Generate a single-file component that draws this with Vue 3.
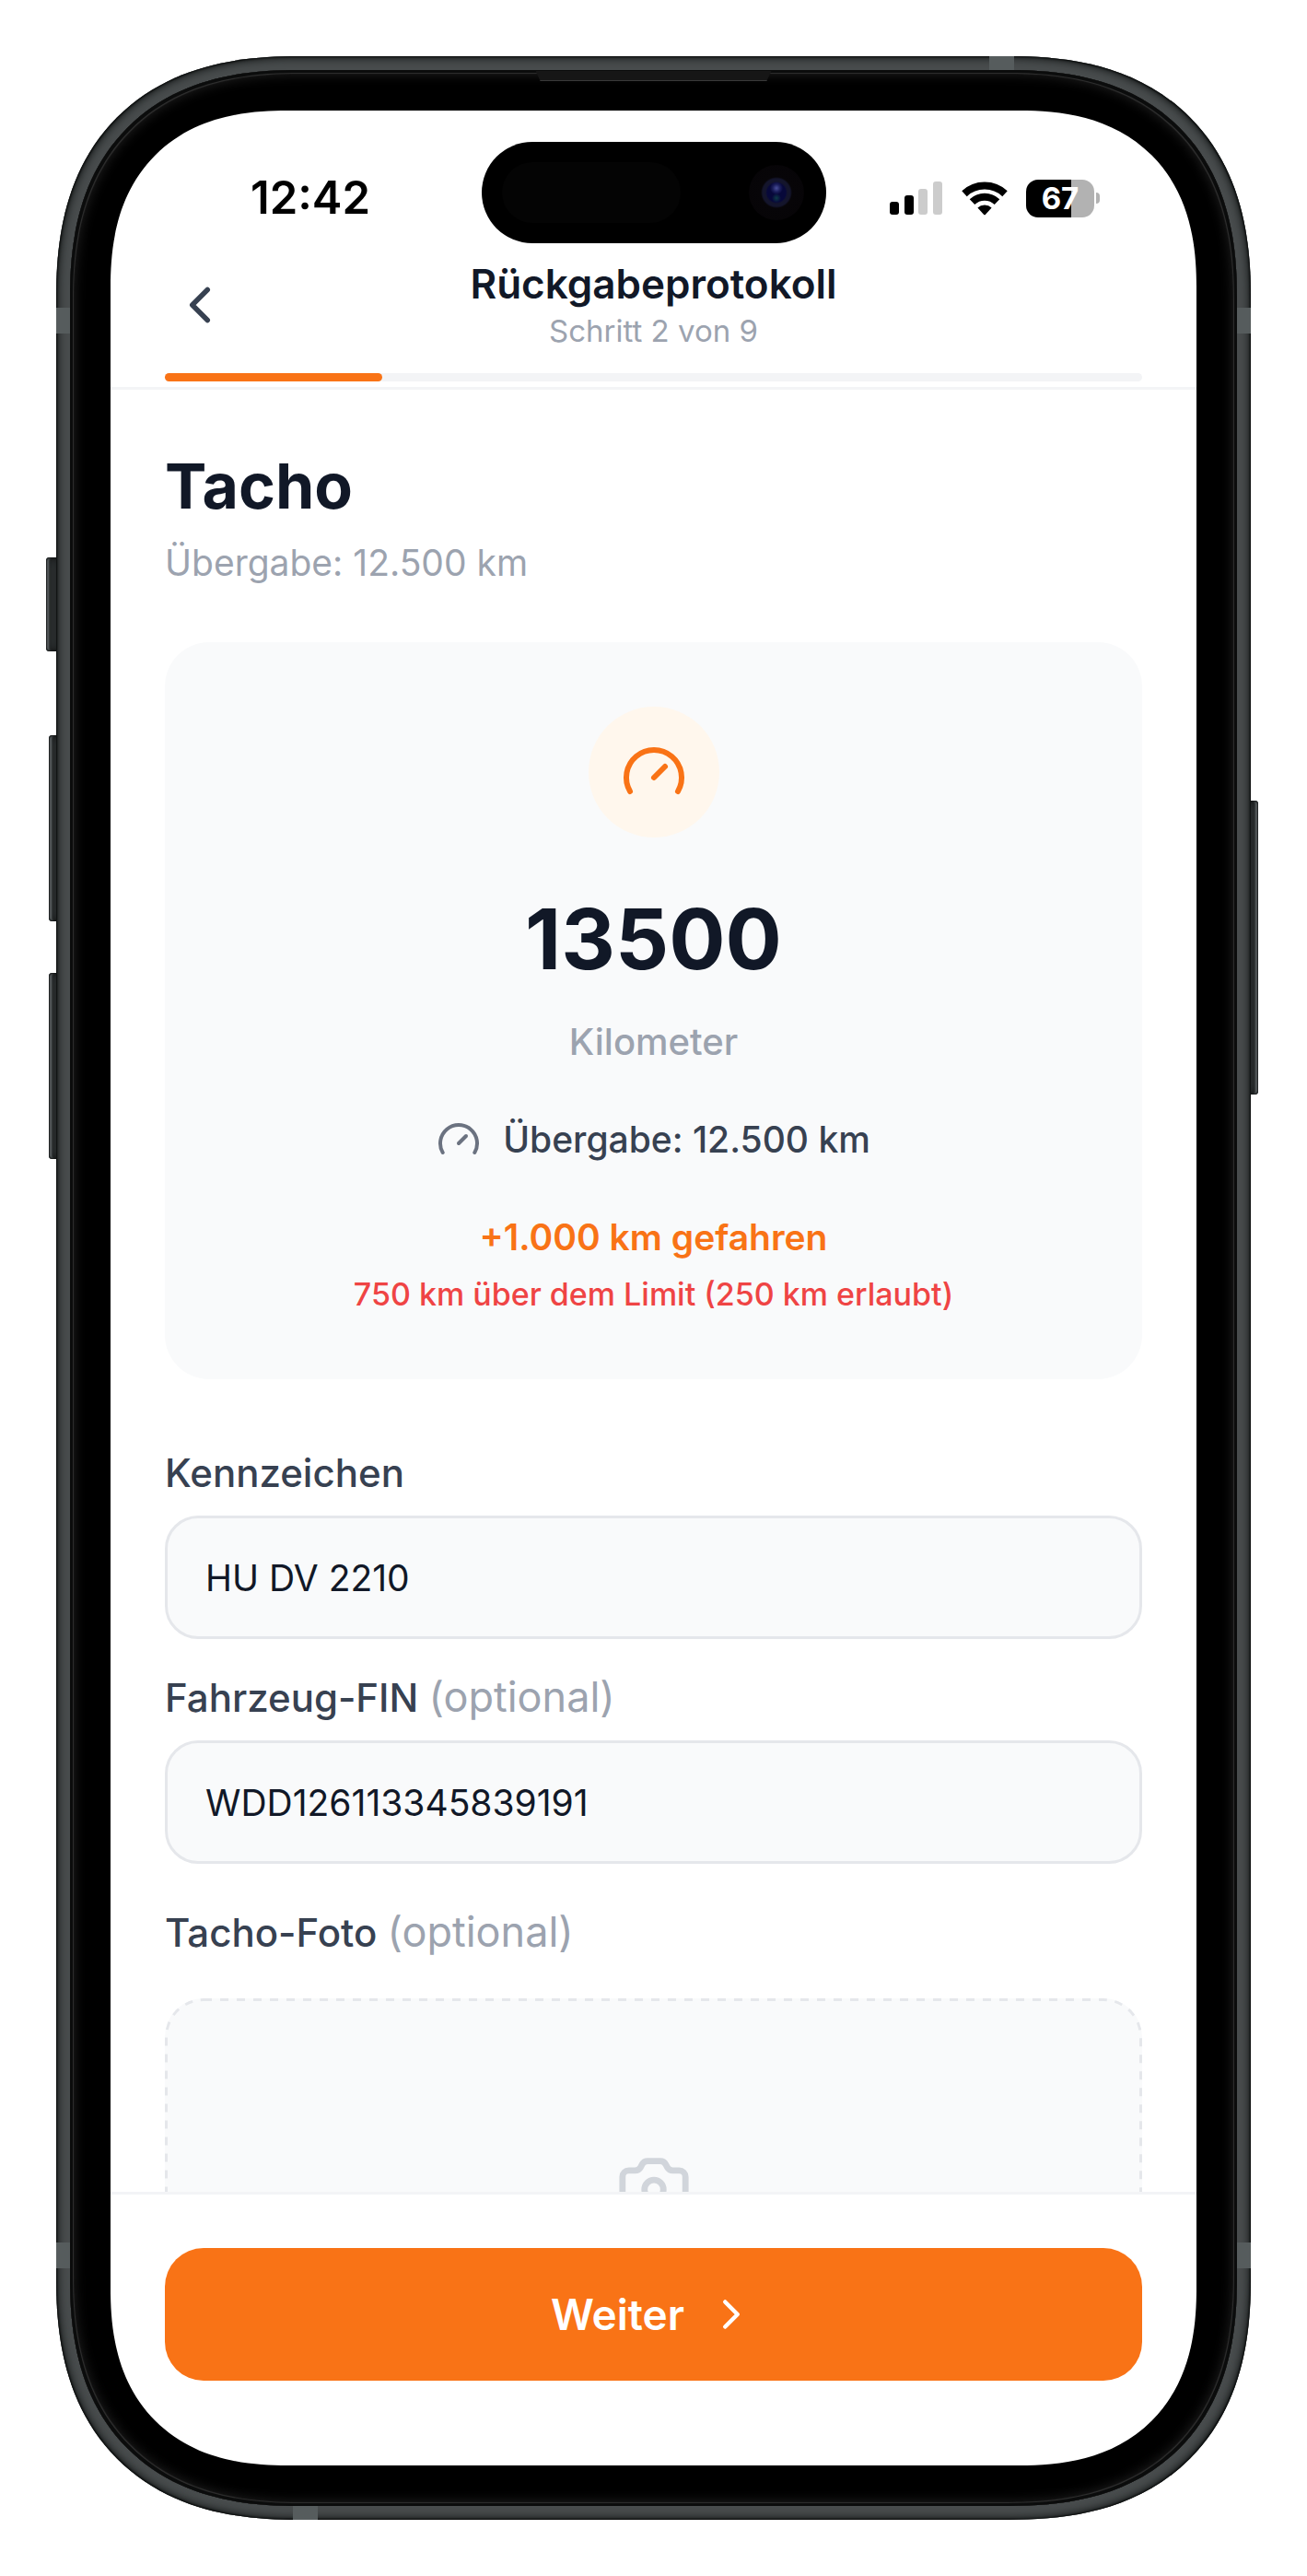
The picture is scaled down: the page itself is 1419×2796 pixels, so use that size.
<script setup>
import { ref } from 'vue'

const step = 2
const totalSteps = 9
const mileage = 13500
const plate = ref('HU DV 2210')
const vin = ref('WDD126113345839191')
</script>

<template>
  <div class="stage">
    <div class="phone">
      <span class="key key-action"></span>
      <span class="key key-up"></span>
      <span class="key key-down"></span>
      <span class="key key-power"></span>
      <div class="metal">
        <span class="band band-side band-left band-high"></span>
        <span class="band band-side band-right band-high"></span>
        <span class="band band-side band-left band-low"></span>
        <span class="band band-side band-right band-low"></span>
        <span class="band band-top"></span>
        <span class="band band-bottom"></span>
        <div class="bezel">
          <span class="earpiece"></span>
          <div class="screen">
            <div class="island">
              <span class="sensor"></span>
              <span class="camera-lens"></span>
            </div>

            <div class="status-bar">
              <span class="clock">12:42</span>
              <div class="status-icons">
                <svg class="signal" width="58" height="36" viewBox="0 0 58 36" aria-hidden="true">
                  <rect x="0" y="22" width="10" height="14" rx="3" />
                  <rect x="16" y="15" width="10" height="21" rx="3" />
                  <rect x="31" y="8" width="10" height="28" rx="3" fill="#cccccc" />
                  <rect x="47" y="0" width="10" height="36" rx="3" fill="#cccccc" />
                </svg>
                <svg class="wifi" width="50" height="37" viewBox="0 0 50 37" aria-hidden="true">
                  <g fill="none" stroke="#000">
                    <path d="M3 13.2A32.3 32.3 0 0 1 47 13.2" stroke-width="8" />
                    <path d="M11.5 22.2A19.5 19.5 0 0 1 38.5 22.2" stroke-width="8" />
                  </g>
                  <path d="M17.4 28.5A11 11 0 0 1 32.6 28.5L26 35.8Q25 36.8 24 35.8Z" />
                </svg>
                <div class="battery">
                  <span class="battery-body">67</span>
                  <span class="battery-tip"></span>
                </div>
              </div>
            </div>

            <header class="header">
              <div class="header-row">
                <button class="back" type="button" aria-label="Zurück">
                  <svg width="66" height="66" viewBox="0 0 24 24" aria-hidden="true">
                    <path d="m15 18-6-6 6-6" />
                  </svg>
                </button>
                <div class="header-text">
                  <h1 class="header-title">Rückgabeprotokoll</h1>
                  <p class="header-step">Schritt {{ step }} von {{ totalSteps }}</p>
                </div>
              </div>
              <div class="progress">
                <div class="progress-fill" :style="{ width: (step / totalSteps) * 100 + '%' }"></div>
              </div>
            </header>

            <main class="content">
              <h2 class="title">Tacho</h2>
              <p class="subtitle">Übergabe: 12.500 km</p>

              <section class="card">
                <div class="badge">
                  <svg width="72" height="72" viewBox="0 0 24 24" aria-hidden="true">
                    <path d="m12 14 4-4" />
                    <path d="M3.34 19a10 10 0 1 1 17.32 0" />
                  </svg>
                </div>
                <p class="mileage">{{ mileage }}</p>
                <p class="unit">Kilometer</p>
                <p class="handover">
                  <svg width="48" height="48" viewBox="0 0 24 24" aria-hidden="true">
                    <path d="m12 14 4-4" />
                    <path d="M3.34 19a10 10 0 1 1 17.32 0" />
                  </svg>
                  <span>Übergabe: 12.500 km</span>
                </p>
                <p class="driven">+1.000 km gefahren</p>
                <p class="limit">750 km über dem Limit (250 km erlaubt)</p>
              </section>

              <div class="fields">
                <div class="field">
                  <label class="label" for="plate">Kennzeichen</label>
                  <input id="plate" v-model="plate" class="input" type="text" />
                </div>
                <div class="field">
                  <label class="label" for="vin">Fahrzeug-FIN <span class="optional">(optional)</span></label>
                  <input id="vin" v-model="vin" class="input" type="text" />
                </div>
              </div>

              <p id="photo-label" class="label photo-label">Tacho-Foto <span class="optional">(optional)</span></p>
              <button class="dropzone" type="button" aria-labelledby="photo-label">
                <svg class="dropzone-outline" width="100%" height="100%" aria-hidden="true">
                  <rect class="dash" x="0" y="0" width="100%" height="100%" rx="42" />
                </svg>
                <svg class="camera-icon" width="82" height="82" viewBox="0 0 24 24" aria-hidden="true">
                  <path d="M13.997 4a2 2 0 0 1 1.76 1.05l.486.9A2 2 0 0 0 18.003 7H20a2 2 0 0 1 2 2v9a2 2 0 0 1-2 2H4a2 2 0 0 1-2-2V9a2 2 0 0 1 2-2h1.997a2 2 0 0 0 1.759-1.048l.489-.904A2 2 0 0 1 10.004 4z" />
                  <circle cx="12" cy="13" r="3" />
                </svg>
              </button>
            </main>

            <footer class="footer">
              <button class="next" type="button">
                <span>Weiter</span>
                <svg width="54" height="54" viewBox="0 0 24 24" aria-hidden="true">
                  <path d="m9 18 6-6-6-6" />
                </svg>
              </button>
            </footer>
          </div>
        </div>
      </div>
    </div>
  </div>
</template>

<style>
body {
  margin: 0;
  background: #ffffff;
}
</style>

<style scoped>
.stage {
  padding: 61px;
  font-family: "Inter", "Liberation Sans", sans-serif;
  color: #111827;
}

.stage * {
  box-sizing: border-box;
}

h1,
h2,
p {
  margin: 0;
}

button {
  border: 0;
  padding: 0;
  font-family: inherit;
  cursor: pointer;
}

svg {
  display: block;
  flex: none;
}

/* Device body */
.phone {
  position: relative;
}

.metal {
  position: relative;
  padding: 15px;
  border-radius: 228px;
  background: #484c4d;
  box-shadow: inset 0 0 2px 1px #0a0c0c, inset 0 0 10px 2px #141717;
}

.bezel {
  position: relative;
  padding: 44px;
  border-radius: 213px;
  background: #000000;
  box-shadow: inset 0 0 0 3px #0b0c0c, inset 0 0 1px 4px #303030, inset 0 0 14px 4px #222222;
}

.screen {
  position: relative;
  display: flex;
  flex-direction: column;
  aspect-ratio: 1179 / 2556;
  overflow: hidden;
  border-radius: 167px;
  background: #ffffff;
}

@supports (corner-shape: superellipse(1.25)) {
  .metal,
  .bezel,
  .screen {
    corner-shape: superellipse(1.25);
  }

  .metal {
    border-radius: 262px;
  }

  .bezel {
    border-radius: 247px;
  }

  .screen {
    border-radius: 192px;
  }
}

.key {
  position: absolute;
  border-radius: 4px;
  background: #2c3031;
  box-shadow: inset 0 0 2px 1px #0a0b0b, inset 3px 0 2px #6a7072, inset 0 0 8px 2px #161818;
}

.key-action {
  top: 20.35%;
  left: -11px;
  width: 16px;
  height: 3.8%;
}

.key-up,
.key-down {
  left: -8px;
  width: 14px;
  height: 7.55%;
}

.key-up {
  top: 27.55%;
}

.key-down {
  top: 37.2%;
}

.key-power {
  top: 30.2%;
  right: -8px;
  width: 14px;
  height: 11.95%;
  box-shadow: inset 0 0 2px 1px #0a0b0b, inset -3px 0 2px #6a7072, inset 0 0 8px 2px #161818;
}

.band {
  position: absolute;
  background: #565c5d;
}

.band-side {
  width: 15px;
  height: 28px;
}

.band-left {
  left: 0;
}

.band-right {
  right: 0;
}

.band-high {
  top: 10.2%;
}

.band-low {
  bottom: 10.2%;
}

.band-top,
.band-bottom {
  width: 27px;
  height: 15px;
}

.band-top {
  top: 0;
  right: 19.8%;
}

.band-bottom {
  bottom: 0;
  left: 19.8%;
}

.earpiece {
  position: absolute;
  top: 1px;
  left: 50%;
  width: 256px;
  height: 11px;
  margin-left: -128px;
  border-bottom: 1px solid #3a3a3a;
  background: #161616;
  clip-path: polygon(0 0, 100% 0, 98% 100%, 2% 100%);
}

/* Status bar */
.island {
  position: absolute;
  top: 34px;
  left: 50%;
  display: flex;
  align-items: center;
  justify-content: space-between;
  width: 374px;
  height: 110px;
  padding: 0 24px 0 22px;
  border-radius: 55px;
  background: #000000;
  transform: translateX(-50%);
}

.sensor {
  width: 194px;
  height: 66px;
  border-radius: 33px;
  background: #040404;
}

.camera-lens {
  width: 60px;
  height: 60px;
  border-radius: 50%;
  background:
    radial-gradient(circle at 50% 42%, #4a4f9a 0, #1c1f5c 4px, transparent 7px),
    radial-gradient(circle at 50% 60%, #0e3c48 0, transparent 5px),
    radial-gradient(circle, #07083a 0, #07083a 10px, #14152c 12px, #14152c 15px, #070508 17px, #060406 100%);
}

.status-bar {
  display: flex;
  align-items: center;
  justify-content: space-between;
  height: 150px;
  padding: 40px 105px 0 152px;
}

.clock {
  font-size: 49px;
  font-weight: 600;
  line-height: 60px;
  color: #000000;
}

.status-icons {
  display: flex;
  align-items: center;
  gap: 20px;
}

.battery {
  display: flex;
  align-items: center;
  gap: 2px;
}

.battery-body {
  width: 74px;
  height: 41px;
  border-radius: 13px;
  background: linear-gradient(90deg, #000000 66%, #b2b2b2 66%);
  color: #ffffff;
  font-size: 33px;
  font-weight: 700;
  line-height: 41px;
  text-align: center;
}

.battery-tip {
  width: 4px;
  height: 12px;
  border-radius: 0 6px 6px 0;
  background: #b2b2b2;
}

/* Header */
.header {
  padding: 10px 59px 6px;
  border-bottom: 3px solid #f3f4f6;
}

.header-row {
  display: grid;
  grid-template-columns: 1fr auto 1fr;
  align-items: center;
}

.back {
  display: flex;
  align-items: center;
  justify-content: center;
  width: 76px;
  height: 76px;
  background: transparent;
}

.back path {
  fill: none;
  stroke: #374151;
  stroke-width: 2;
  stroke-linecap: round;
  stroke-linejoin: round;
}

.header-text {
  text-align: center;
}

.header-title {
  font-size: 44px;
  font-weight: 600;
  line-height: 56px;
}

.header-step {
  color: #9ca3af;
  font-size: 33px;
  line-height: 46px;
}

.progress {
  height: 9px;
  margin-top: 23px;
  border-radius: 5px;
  background: #f3f4f6;
}

.progress-fill {
  height: 100%;
  border-radius: 5px;
  background: #f97316;
}

/* Content */
.content {
  flex: 1;
  min-height: 0;
  overflow: hidden;
  padding: 64px 59px 0;
}

.title {
  font-size: 68px;
  font-weight: 700;
  line-height: 80px;
}

.subtitle {
  margin-top: 16px;
  color: #9ca3af;
  font-size: 39px;
  line-height: 56px;
}

.card {
  display: flex;
  flex-direction: column;
  align-items: center;
  margin-top: 58px;
  padding: 70px 24px 68px;
  border-radius: 48px;
  background: #f9fafb;
  text-align: center;
}

.badge {
  display: flex;
  align-items: center;
  justify-content: center;
  width: 142px;
  height: 142px;
  border-radius: 50%;
  background: #fff7ed;
}

.badge path,
.handover path {
  fill: none;
  stroke: #f97316;
  stroke-width: 2;
  stroke-linecap: round;
  stroke-linejoin: round;
}

.mileage {
  margin-top: 54px;
  font-size: 91px;
  font-weight: 700;
  line-height: 112px;
}

.unit {
  margin-top: 28px;
  color: #9ca3af;
  font-size: 40px;
  font-weight: 500;
  line-height: 56px;
}

.handover {
  display: flex;
  align-items: center;
  gap: 24px;
  margin-top: 50px;
  color: #374151;
  font-size: 39px;
  font-weight: 500;
  line-height: 56px;
}

.handover path {
  stroke: #6b7280;
}

.driven {
  margin-top: 50px;
  color: #f97316;
  font-size: 39px;
  font-weight: 600;
  line-height: 56px;
}

.limit {
  margin-top: 10px;
  color: #ef4444;
  font-size: 34px;
  font-weight: 500;
  line-height: 48px;
}

.fields {
  display: flex;
  flex-direction: column;
  gap: 34px;
  margin-top: 72px;
}

.field {
  display: flex;
  flex-direction: column;
  gap: 16px;
}

.label {
  color: #374151;
  font-size: 42px;
  font-weight: 500;
  line-height: 60px;
}

.optional {
  color: #9ca3af;
  font-size: 45px;
  font-weight: 400;
  line-height: 1;
}

.input {
  width: 100%;
  height: 134px;
  padding: 0 41px;
  border: 3px solid #e5e7eb;
  border-radius: 36px;
  background: #f9fafb;
  color: #111827;
  font-family: inherit;
  font-size: 39px;
  outline: none;
}

.photo-label {
  margin-top: 45px;
}

.dropzone {
  position: relative;
  display: flex;
  justify-content: center;
  width: 100%;
  height: 480px;
  margin-top: 41px;
  padding-top: 163px;
  border-radius: 42px;
  background: #f9fafb;
  overflow: hidden;
}

.dropzone-outline {
  position: absolute;
  inset: 0;
}

.dash {
  fill: none;
  stroke: #e5e7eb;
  stroke-width: 6;
  stroke-dasharray: 9 9;
}

.camera-icon {
  fill: none;
  stroke: #d1d5db;
  stroke-width: 2;
  stroke-linecap: round;
  stroke-linejoin: round;
}

/* Footer */
.footer {
  padding: 58px 59px 92px;
  border-top: 3px solid #f3f4f6;
}

.next {
  display: flex;
  align-items: center;
  justify-content: center;
  gap: 24px;
  width: 100%;
  height: 144px;
  border-radius: 42px;
  background: #f97316;
  color: #ffffff;
  font-size: 46px;
  font-weight: 600;
}

.next path {
  fill: none;
  stroke: #ffffff;
  stroke-width: 2;
  stroke-linecap: round;
  stroke-linejoin: round;
}
</style>
